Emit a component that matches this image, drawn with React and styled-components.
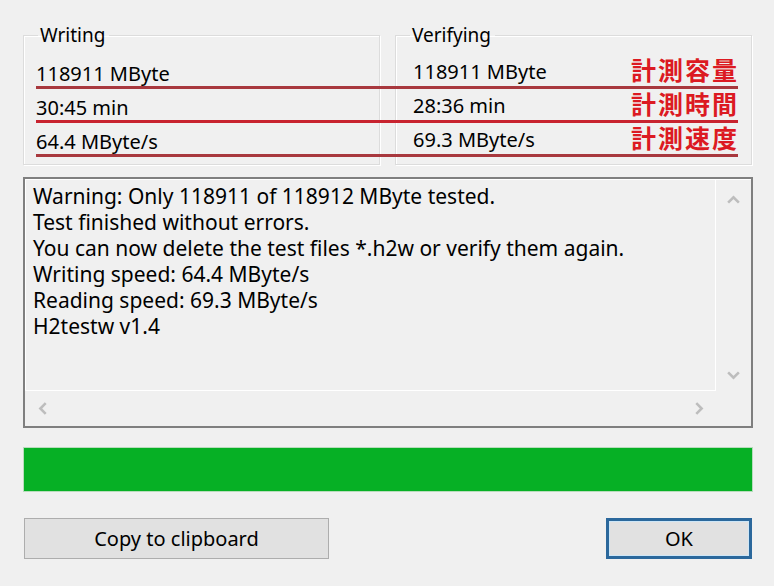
import React from "react";
import styled, { createGlobalStyle } from "styled-components";

const Global = createGlobalStyle`
  html, body { margin: 0; padding: 0; background: #f0f0f0; }
  body { font-family: "Noto Sans", "Open Sans", sans-serif; color: #000; }
`;

const Dialog = styled.div`
  width: 774px;
  height: 586px;
  box-sizing: border-box;
  padding: 23px 21px 0 23px;
  display: flex;
  flex-direction: column;
`;

const StatsArea = styled.div`
  position: relative;
  display: grid;
  grid-template-columns: 357px 357px;
  column-gap: 15px;
`;

const Group = styled.fieldset`
  margin: 0;
  height: 142px;
  box-sizing: border-box;
  border: 1px solid #dcdcdc;
  box-shadow: inset 1px 1px 0 #fff, 1px 1px 0 #fff;
  padding: 10px 0 0 ${(p) => p.$inset}px;
  min-width: 0;
`;

const Legend = styled.legend`
  margin-left: ${(p) => 14 - p.$inset}px;
  padding: 0 4px 0 2px;
  font-size: 19px;
  line-height: 24px;
  color: #000;
`;

const ValueRow = styled.div`
  font-size: 20px;
  line-height: 34px;
  height: 34px;
  white-space: nowrap;
  transform: translateY(${(p) => p.$shift || 0}px);
`;

const Annotations = styled.div`
  position: absolute;
  left: 13px;
  top: 35px;
  width: 702px;
  display: flex;
  flex-direction: column;
  pointer-events: none;
`;

const Note = styled.div`
  height: 28px;
  margin-bottom: 3px;
  border-bottom: 3px solid ${(p) => p.$line};
  display: flex;
  justify-content: flex-end;
  align-items: flex-end;
`;

const NoteText = styled.span`
  font-family: "Noto Sans CJK JP", "Noto Sans CJK SC", sans-serif;
  font-weight: 700;
  font-size: 25px;
  letter-spacing: 2px;
  line-height: 30px;
  color: #dc1a22;
  margin-bottom: 2px;
  margin-right: -1px;
`;

const LogBox = styled.div`
  margin-top: 12px;
  height: 251px;
  box-sizing: border-box;
  border: 2px solid #7f7f7f;
  display: grid;
  grid-template-columns: 1fr 35px;
  grid-template-rows: 1fr 35px;
  background: #f0f0f0;
`;

const LogText = styled.div`
  border: 1px solid #fff;
  padding: 3px 7px;
  font-size: 21px;
  line-height: 26px;
  white-space: pre;
  overflow: hidden;
`;

const ScrollV = styled.div`
  border-top: 1px solid #fff;
  display: flex;
  flex-direction: column;
  justify-content: space-between;
  align-items: center;
  padding: 12px 0 8px;
`;

const ScrollH = styled.div`
  display: flex;
  justify-content: space-between;
  align-items: center;
  padding: 0 9px 0 10px;
`;

const Corner = styled.div``;

const Arrow = styled.svg`
  width: 15px;
  height: 15px;
  display: block;
`;

const Chevron = ({ dir }) => {
  const rot = { up: 0, down: 180, left: -90, right: 90 }[dir];
  return (
    <Arrow viewBox="0 0 14 14">
      <path
        d="M2 10 L7 5 L12 10"
        fill="none"
        stroke="#bdbdbd"
        strokeWidth="2.4"
        transform={`rotate(${rot} 7 7)`}
      />
    </Arrow>
  );
};

const Progress = styled.div`
  margin-top: 19px;
  height: 45px;
  box-sizing: border-box;
  border: 1px solid #b8dcbc;
  background: #e6e6e6;
`;

const ProgressFill = styled.div`
  height: 100%;
  background: #06b025;
`;

const ButtonRow = styled.div`
  margin-top: 26px;
  display: flex;
  justify-content: space-between;
  padding-left: 1px;
`;

const Button = styled.button`
  width: ${(p) => p.$w}px;
  height: 41px;
  box-sizing: border-box;
  font-family: "Noto Sans", "Open Sans", sans-serif;
  font-size: 20px;
  color: #000;
  background: #e1e1e1;
  border: ${(p) => (p.$default ? "3px solid #2b689c" : "1px solid #adadad")};
  box-shadow: ${(p) => (p.$default ? "inset 0 0 0 1px #cde6f7" : "none")};
  padding: 0;
  margin-right: ${(p) => p.$mr || 0}px;
`;

const writing = ["118911 MByte", "30:45 min", "64.4 MByte/s"];
const verifying = ["118911 MByte", "28:36 min", "69.3 MByte/s"];
const notes = [
  { t: "計測容量", c: "#a8383e" },
  { t: "計測時間", c: "#c8232f" },
  { t: "計測速度", c: "#a8383e" },
];

const log = `Warning: Only 118911 of 118912 MByte tested.
Test finished without errors.
You can now delete the test files *.h2w or verify them again.
Writing speed: 64.4 MByte/s
Reading speed: 69.3 MByte/s
H2testw v1.4`;

export default function App() {
  return (
    <>
      <Global />
      <Dialog>
        <StatsArea>
          <Group $inset={12}>
            <Legend $inset={12}>Writing</Legend>
            {writing.map((v) => (
              <ValueRow key={v}>{v}</ValueRow>
            ))}
          </Group>
          <Group $inset={17}>
            <Legend $inset={17}>Verifying</Legend>
            {verifying.map((v) => (
              <ValueRow key={v} $shift={-2}>
                {v}
              </ValueRow>
            ))}
          </Group>
          <Annotations>
            {notes.map((n) => (
              <Note key={n.t} $line={n.c}>
                <NoteText>{n.t}</NoteText>
              </Note>
            ))}
          </Annotations>
        </StatsArea>

        <LogBox>
          <LogText>{log}</LogText>
          <ScrollV>
            <Chevron dir="up" />
            <Chevron dir="down" />
          </ScrollV>
          <ScrollH>
            <Chevron dir="left" />
            <Chevron dir="right" />
          </ScrollH>
          <Corner />
        </LogBox>

        <Progress>
          <ProgressFill style={{ width: "100%" }} />
        </Progress>

        <ButtonRow>
          <Button $w={305}>Copy to clipboard</Button>
          <Button $w={146} $default $mr={1}>
            OK
          </Button>
        </ButtonRow>
      </Dialog>
    </>
  );
}
